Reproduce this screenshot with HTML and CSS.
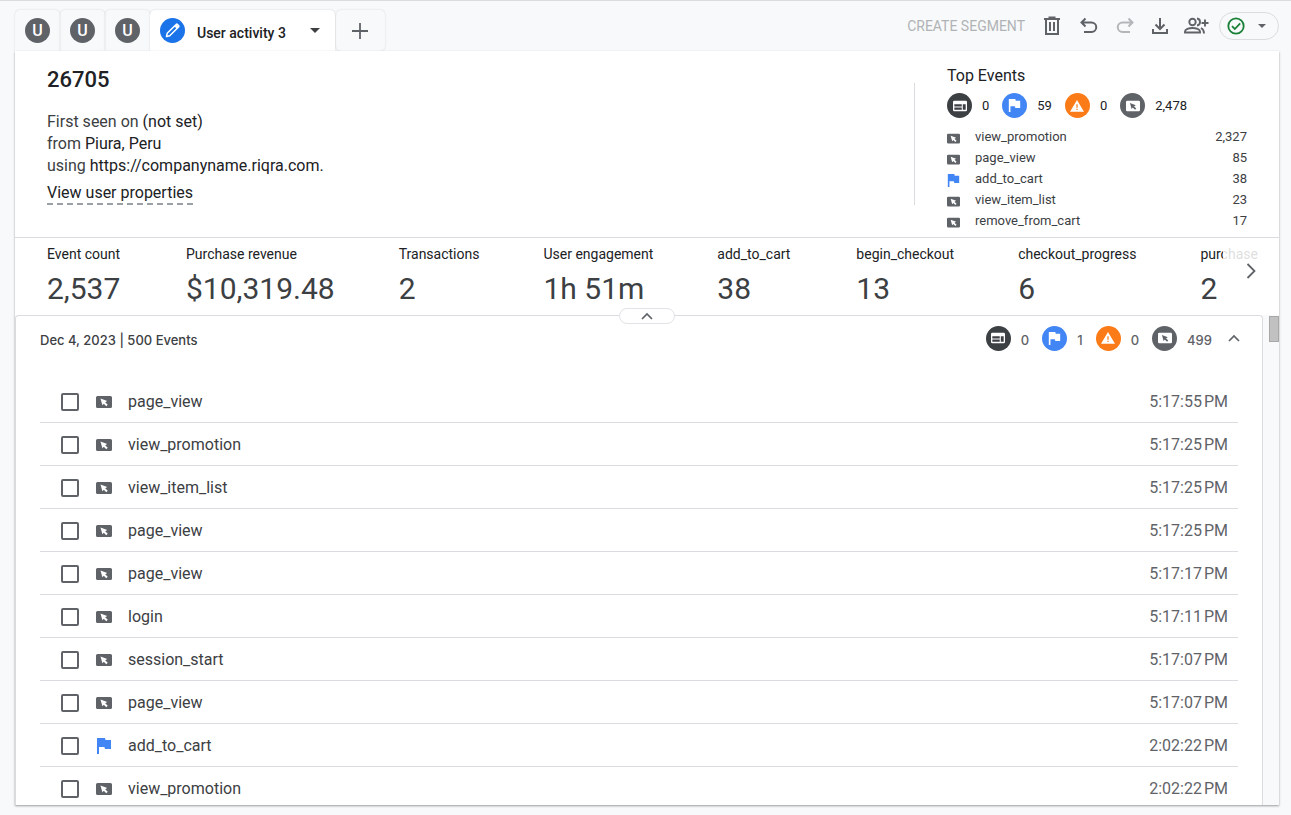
FILE: index.html
```html
<!DOCTYPE html>
<html lang="en">
<head>
    <meta charset="UTF-8">
    <meta name="viewport" content="width=device-width, initial-scale=1.0">
    <title>User activity 3</title>
    <link rel="stylesheet" href="styles.css">
</head>
<body>
    <svg class="sprite" aria-hidden="true">
        <symbol id="event" viewBox="0 0 16 16">
            <path fill="currentColor" fill-rule="evenodd" d="M1.500 2h13A1.500 1.500 0 0 1 16 3.500v9a1.500 1.500 0 0 1-1.500 1.500h-13A1.500 1.500 0 0 1 0 12.500v-9A1.500 1.500 0 0 1 1.500 2zM4.500 4.500L6.400 11.300 7.800 9.700 10.300 12.200 11.700 10.800 9.200 8.300 11.200 7z"/>
        </symbol>
        <symbol id="flag" viewBox="0 0 16 16">
            <path fill="currentColor" d="M1 0h8l.5 2H15v9H9l-.6-2H3v7H1z"/>
        </symbol>
        <symbol id="screen" viewBox="0 0 16 16">
            <path fill="currentColor" fill-rule="evenodd" d="M1.500 2h13A1.500 1.500 0 0 1 16 3.500v9a1.500 1.500 0 0 1-1.500 1.500h-13A1.500 1.500 0 0 1 0 12.500v-9A1.500 1.500 0 0 1 1.500 2zM1.500 6v2.500H10V6zm0 3.700v2.500H10V9.700zM11.200 6v6.200h3.300V6z"/>
        </symbol>
        <symbol id="warning" viewBox="0 0 16 16">
            <path fill="currentColor" fill-rule="evenodd" d="M8 1l8 13.500H0zM7.300 6v4h1.400V6zm0 5v1.500h1.400V11z"/>
        </symbol>
        <symbol id="up" viewBox="0 0 12 12">
            <path fill="none" stroke="currentColor" stroke-width="1.700" d="M1 9l5-5 5 5"/>
        </symbol>
        <symbol id="drop" viewBox="0 0 10 5">
            <path fill="currentColor" d="M0 0h10L5 5z"/>
        </symbol>
    </svg>

    <div class="app">
        <header class="topbar">
            <nav class="tabs">
                <button class="tab"><span class="letter">U</span></button>
                <button class="tab"><span class="letter">U</span></button>
                <button class="tab"><span class="letter">U</span></button>
                <button class="tab active">
                    <span class="letter edit">
                        <svg width="15" height="15" viewBox="0 0 15 15"><path fill="none" stroke="#fff" stroke-width="1.500" stroke-linejoin="round" d="M1.500 13.500l.7-3.200 7.600-7.600 2.500 2.500-7.600 7.600zM9.500 3l1.600-1.500a1 1 0 0 1 1.400 0l1 1a1 1 0 0 1 0 1.400L12 5.500"/><path fill="#fff" d="M10 2.800l1.500-1.500 2.200 2.200L12.200 5z"/></svg>
                    </span>
                    <span class="tab-name">User activity 3</span>
                    <svg class="tab-drop" width="10" height="5"><use href="#drop"/></svg>
                </button>
                <button class="tab add" aria-label="Add technique">
                    <svg width="16" height="16" viewBox="0 0 16 16"><path stroke="#5f6368" stroke-width="1.800" d="M8 0v16M0 8h16"/></svg>
                </button>
            </nav>
            <div class="tools">
                <button class="segment" disabled>CREATE SEGMENT</button>
                <button class="tool" aria-label="Delete">
                    <svg width="20" height="20" viewBox="0 0 20 20"><path fill="none" stroke="currentColor" stroke-width="2" d="M2 3h16M6.500 1.500h7M4 3v15h12V3M8 6v9M12 6v9"/></svg>
                </button>
                <button class="tool" aria-label="Undo">
                    <svg width="20" height="20" viewBox="0 0 20 20"><path fill="none" stroke="currentColor" stroke-width="2" d="M7.500 2.500l-4 4 4 4M4 6.500h9.500a4.500 4.500 0 0 1 0 9.500H6"/></svg>
                </button>
                <button class="tool faded" aria-label="Redo" disabled>
                    <svg width="20" height="20" viewBox="0 0 20 20"><path fill="none" stroke="currentColor" stroke-width="2" d="M14.500 2.500l4 4-4 4M18 6.500H8.500a4.500 4.500 0 0 0 0 9.500H16"/></svg>
                </button>
                <button class="tool" aria-label="Export">
                    <svg width="20" height="20" viewBox="0 0 20 20"><path fill="none" stroke="currentColor" stroke-width="2" d="M10 2v10.500M5.500 8.500L10 13l4.500-4.500M3 13v4h14v-4"/></svg>
                </button>
                <button class="tool" aria-label="Share">
                    <svg width="26" height="20" viewBox="0 0 26 20"><g fill="none" stroke="currentColor" stroke-width="1.900"><circle cx="9.500" cy="6" r="3.200"/><path d="M2 16.500v-1c0-2.200 4-3.500 7.500-3.500s7.500 1.300 7.500 3.500v1zM14 2.500c4 .4 4 6.500 0 7M18 12c2 1 3 2.200 3 5.500M22 3.500v7M18.500 7h7"/></g></svg>
                </button>
                <button class="status" aria-label="Data quality">
                    <svg width="18" height="18" viewBox="0 0 18 18"><g fill="none" stroke="#188038" stroke-width="1.800"><circle cx="9" cy="9" r="7.700"/><path d="M5 9.200l2.800 2.800 5.400-5.600"/></g></svg>
                    <svg width="8" height="4"><use href="#drop"/></svg>
                </button>
            </div>
        </header>

        <main class="panel">
            <section class="summary">
                <div class="user">
                    <h1>26705</h1>
                    <p>First seen on <b>(not set)</b></p>
                    <p>from <b>Piura, Peru</b></p>
                    <p>using <b>https://companyname.riqra.com.</b></p>
                    <a class="properties" href="#">View user properties</a>
                </div>
                <aside class="top-events">
                    <h2>Top Events</h2>
                    <div class="counts">
                        <span class="badge screen"><svg><use href="#screen"/></svg></span><span class="num">0</span>
                        <span class="badge flag"><svg><use href="#flag"/></svg></span><span class="num">59</span>
                        <span class="badge warning"><svg><use href="#warning"/></svg></span><span class="num">0</span>
                        <span class="badge event"><svg><use href="#event"/></svg></span><span class="num">2,478</span>
                    </div>
                    <ul class="top-list">
                        <li><svg class="icon"><use href="#event"/></svg><span>view_promotion</span><span class="total">2,327</span></li>
                        <li><svg class="icon"><use href="#event"/></svg><span>page_view</span><span class="total">85</span></li>
                        <li><svg class="icon blue"><use href="#flag"/></svg><span>add_to_cart</span><span class="total">38</span></li>
                        <li><svg class="icon"><use href="#event"/></svg><span>view_item_list</span><span class="total">23</span></li>
                        <li><svg class="icon"><use href="#event"/></svg><span>remove_from_cart</span><span class="total">17</span></li>
                    </ul>
                </aside>
            </section>

            <section class="metrics">
                <div class="metric-row">
                    <div class="metric"><span>Event count</span><strong>2,537</strong></div>
                    <div class="metric"><span>Purchase revenue</span><strong>$10,319.48</strong></div>
                    <div class="metric"><span>Transactions</span><strong>2</strong></div>
                    <div class="metric"><span>User engagement</span><strong>1h 51m</strong></div>
                    <div class="metric"><span>add_to_cart</span><strong>38</strong></div>
                    <div class="metric"><span>begin_checkout</span><strong>13</strong></div>
                    <div class="metric"><span>checkout_progress</span><strong>6</strong></div>
                    <div class="metric"><span>purchase</span><strong>2</strong></div>
                </div>
                <button class="next" aria-label="Next metrics">
                    <svg width="10" height="16" viewBox="0 0 10 16"><path fill="none" stroke="#5f6368" stroke-width="1.800" d="M1.500 1l7 7-7 7"/></svg>
                </button>
                <button class="collapse" aria-label="Collapse"><svg width="12" height="12"><use href="#up"/></svg></button>
            </section>

            <section class="timeline">
                <div class="day">
                    <div class="day-head">
                        <h3>Dec 4, 2023 | 500 Events</h3>
                        <div class="counts">
                            <span class="badge screen"><svg><use href="#screen"/></svg></span><span class="num">0</span>
                            <span class="badge flag"><svg><use href="#flag"/></svg></span><span class="num">1</span>
                            <span class="badge warning"><svg><use href="#warning"/></svg></span><span class="num">0</span>
                            <span class="badge event"><svg><use href="#event"/></svg></span><span class="num">499</span>
                        </div>
                        <button class="fold" aria-label="Collapse day"><svg width="12" height="12"><use href="#up"/></svg></button>
                    </div>
                    <ul class="events">
                        <li><input type="checkbox" id="e1"><svg class="icon"><use href="#event"/></svg><label for="e1">page_view</label><time>5:17:55&#8239;PM</time></li>
                        <li><input type="checkbox" id="e2"><svg class="icon"><use href="#event"/></svg><label for="e2">view_promotion</label><time>5:17:25&#8239;PM</time></li>
                        <li><input type="checkbox" id="e3"><svg class="icon"><use href="#event"/></svg><label for="e3">view_item_list</label><time>5:17:25&#8239;PM</time></li>
                        <li><input type="checkbox" id="e4"><svg class="icon"><use href="#event"/></svg><label for="e4">page_view</label><time>5:17:25&#8239;PM</time></li>
                        <li><input type="checkbox" id="e5"><svg class="icon"><use href="#event"/></svg><label for="e5">page_view</label><time>5:17:17&#8239;PM</time></li>
                        <li><input type="checkbox" id="e6"><svg class="icon"><use href="#event"/></svg><label for="e6">login</label><time>5:17:11&#8239;PM</time></li>
                        <li><input type="checkbox" id="e7"><svg class="icon"><use href="#event"/></svg><label for="e7">session_start</label><time>5:17:07&#8239;PM</time></li>
                        <li><input type="checkbox" id="e8"><svg class="icon"><use href="#event"/></svg><label for="e8">page_view</label><time>5:17:07&#8239;PM</time></li>
                        <li><input type="checkbox" id="e9"><svg class="icon blue"><use href="#flag"/></svg><label for="e9">add_to_cart</label><time>2:02:22&#8239;PM</time></li>
                        <li><input type="checkbox" id="e10"><svg class="icon"><use href="#event"/></svg><label for="e10">view_promotion</label><time>2:02:22&#8239;PM</time></li>
                    </ul>
                </div>
                <div class="scrollbar"><div class="thumb"></div></div>
            </section>
        </main>
    </div>
</body>
</html>
```
FILE: styles.css
```css
* {
    box-sizing: border-box;
}
body {
    margin: 0;
    background-color: #f8f9fa;
    font-family: Roboto, Arial, sans-serif;
    color: #202124;
}
h1, h2, h3, p, ul {
    margin: 0;
    padding: 0;
    font-weight: 400;
}
ul {
    list-style: none;
}
button {
    font-family: inherit;
    border: 0;
    padding: 0;
    background: none;
    color: #5f6368;
    cursor: pointer;
}
svg {
    display: block;
    flex-shrink: 0;
}
.sprite {
    display: none;
}
.app {
    height: 100vh;
    display: flex;
    flex-direction: column;
    border-top: 1px solid #dadce0;
    padding: 0 12px 10px 15px;
}

/* tabs and toolbar */
.topbar {
    display: flex;
    justify-content: space-between;
    height: 50px;
    flex-shrink: 0;
}
.tabs {
    display: flex;
    align-items: flex-end;
}
.tab {
    width: 45px;
    height: 41px;
    display: flex;
    align-items: center;
    justify-content: center;
    border-radius: 5px 5px 0 0;
    box-shadow: 0 0 2px rgba(60, 64, 67, 0.2);
}
.letter {
    width: 25px;
    height: 25px;
    display: flex;
    align-items: center;
    justify-content: center;
    border-radius: 50%;
    background-color: #5f6368;
    color: #fff;
    font-size: 16px;
    font-weight: 500;
}
.tab.active {
    width: auto;
    padding: 0 15px 0 10px;
    background-color: #fff;
    position: relative;
}
.letter.edit {
    background-color: #1a73e8;
}
.tab-name {
    margin: 4px 24px 0 12px;
    color: #202124;
    font-size: 14px;
    font-weight: 500;
}
.tab-drop {
    color: #3c4043;
}
.tab.add {
    width: 49px;
    margin-left: 1px;
    border-radius: 5px;
}
.tools {
    display: flex;
    align-items: center;
    gap: 10px;
}
.segment {
    font-size: 14px;
    color: #b0b3b6;
    margin-right: 4px;
}
.tool {
    width: 26px;
    height: 24px;
    display: flex;
    align-items: center;
    justify-content: center;
}
.tool.faded {
    color: #b4b6b9;
}
.status {
    width: 60px;
    height: 28px;
    display: flex;
    align-items: center;
    padding-left: 7px;
    gap: 13px;
    border: 1px solid #dadce0;
    border-radius: 14px;
}

/* user summary */
.panel {
    flex: 1;
    min-height: 0;
    display: flex;
    flex-direction: column;
    background-color: #fff;
    box-shadow: 0 1px 2px rgba(60, 64, 67, 0.5);
    position: relative;
}
.summary {
    display: flex;
    justify-content: space-between;
    padding: 14px 32px 6px;
    border-bottom: 1px solid #dadce0;
}
.user h1 {
    font-size: 22px;
    font-weight: 500;
    line-height: 30px;
    margin-bottom: 16px;
}
.user p {
    font-size: 16px;
    line-height: 22px;
    color: #3c4043;
}
.user b {
    font-weight: 400;
    color: #202124;
}
.properties {
    display: inline-block;
    margin-top: 6px;
    font-size: 16px;
    line-height: 20px;
    color: #202124;
    text-decoration: none;
    border-bottom: 2px dashed #9aa0a6;
}
.top-events {
    width: 333px;
    padding-left: 33px;
    background: linear-gradient(#dadce0, #dadce0) 0 18px / 1px 122px no-repeat;
}
.top-events h2 {
    font-size: 16px;
    line-height: 22px;
}
.counts {
    display: flex;
    align-items: center;
}
.top-events .counts {
    margin: 6px 0 8px;
    font-size: 13px;
}
.badge {
    width: 25px;
    height: 25px;
    display: flex;
    align-items: center;
    justify-content: center;
    border-radius: 50%;
    color: #fff;
}
.badge svg {
    width: 14px;
    height: 14px;
}
.badge.screen {
    background-color: #3c4043;
}
.badge.flag {
    background-color: #4285f4;
}
.badge.flag svg {
    width: 13px;
    height: 13px;
}
.badge.warning {
    background-color: #fa7b17;
}
.badge.event {
    background-color: #5f6368;
}
.num {
    margin: 0 13px 0 10px;
}
.icon {
    width: 16px;
    height: 16px;
    color: #5f6368;
}
.icon.blue {
    color: #4285f4;
}
.top-list li {
    display: flex;
    align-items: center;
    height: 21px;
    font-size: 13px;
    color: #3c4043;
}
.top-list .icon {
    width: 13px;
    height: 13px;
    margin: 4px 15px 0 0;
}
.total {
    margin-left: auto;
}

/* metric strip */
.metrics {
    position: relative;
    flex-shrink: 0;
}
.metric-row {
    display: flex;
    gap: 64px;
    height: 77px;
    padding: 6px 0 0 32px;
    overflow: hidden;
}
.metric {
    flex-shrink: 0;
    min-width: 75px;
    display: flex;
    flex-direction: column;
    font-size: 14px;
    line-height: 20px;
}
.metric strong {
    margin-top: 5px;
    font-size: 30px;
    font-weight: 400;
    line-height: 40px;
    color: #3c4043;
}
.next {
    position: absolute;
    top: 0;
    right: 0;
    width: 56px;
    height: 66px;
    display: flex;
    align-items: center;
    justify-content: center;
    background-color: rgba(255, 255, 255, 0.85);
}
.collapse {
    position: absolute;
    left: 50%;
    bottom: -9px;
    z-index: 1;
    width: 56px;
    height: 16px;
    display: flex;
    align-items: center;
    justify-content: center;
    margin-left: -28px;
    background-color: #fff;
    border: 1px solid #e1e3e6;
    border-radius: 8px;
}

/* event timeline */
.timeline {
    flex: 1;
    min-height: 0;
    display: flex;
    overflow: hidden;
    background-color: #f8f9fa;
}
.day {
    flex: 1;
    background-color: #fff;
    border: 1px solid #dadce0;
    border-bottom: 0;
    border-radius: 4px 4px 0 0;
}
.day-head {
    display: flex;
    align-items: center;
    height: 64px;
    padding: 0 22px 20px 24px;
}
.day-head h3 {
    flex: 1;
    margin-top: 4px;
    font-family: Inter, Arial, sans-serif;
    font-size: 13px;
    font-weight: 500;
    color: #3c4043;
}
.day-head .counts {
    font-family: Inter, Arial, sans-serif;
    font-size: 13px;
    color: #5f6368;
}
.day-head .num {
    margin-top: 4px;
    font-weight: 500;
}
.day-head .num:last-child {
    margin-right: 16px;
}
.events {
    margin: 0 24px;
}
.events li {
    display: flex;
    align-items: center;
    height: 43px;
    padding: 0 10px 0 21px;
    border-bottom: 1px solid #dadce0;
    font-size: 16px;
    color: #3c4043;
}
.events input {
    appearance: none;
    width: 18px;
    height: 18px;
    margin: 2px 17px 0 0;
    border: 2px solid #5f6368;
    border-radius: 2px;
}
.events input:checked {
    background-color: #5f6368;
}
.events .icon {
    margin-top: 2px;
}
.events label {
    margin-left: 16px;
}
.events time {
    margin-left: auto;
    color: #5f6368;
}
.scrollbar {
    width: 16px;
    padding: 1px 0 0 6px;
}
.thumb {
    height: 26px;
    background-color: #c1c1c1;
    border: 1px solid #a8a8a8;
}
```
